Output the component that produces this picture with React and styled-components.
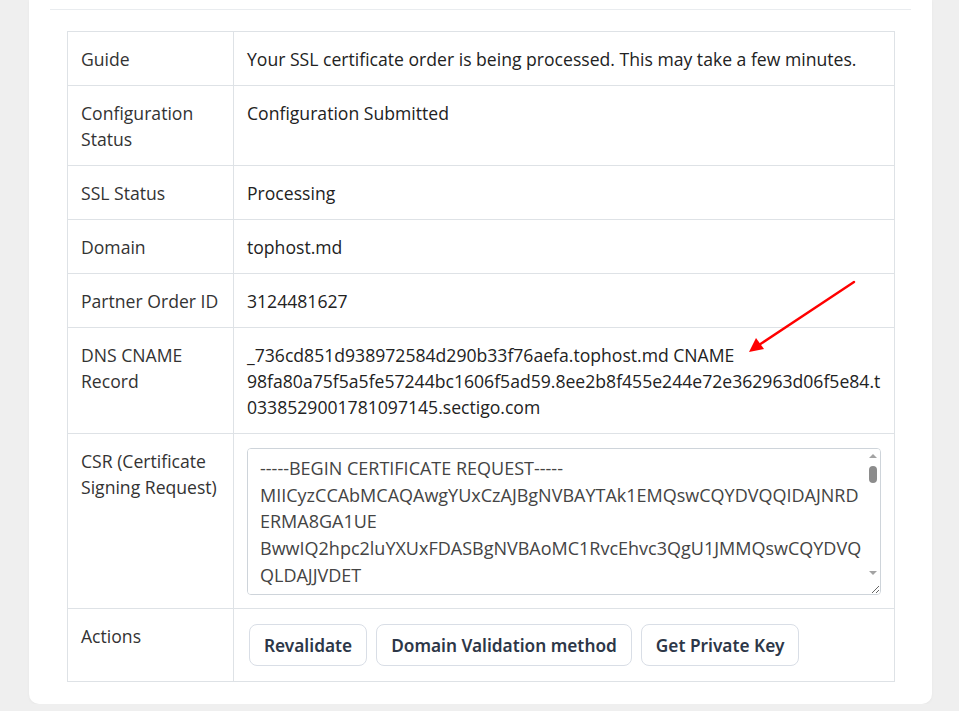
import React from "react";
import styled, { createGlobalStyle } from "styled-components";

const GlobalStyle = createGlobalStyle`
  body {
    margin: 0;
    background-color: #efefef;
    font-family: "Open Sans", "Liberation Sans", sans-serif;
    color: #212529;
  }
`;

const rows = [
  { label: "Guide", value: "Your SSL certificate order is being processed. This may take a few minutes." },
  { label: "Configuration Status", value: "Configuration Submitted" },
  { label: "SSL Status", value: "Processing" },
  { label: "Domain", value: "tophost.md" },
  { label: "Partner Order ID", value: "3124481627" },
  {
    label: "DNS CNAME Record",
    value:
      "_736cd851d938972584d290b33f76aefa.tophost.md CNAME 98fa80a75f5a5fe57244bc1606f5ad59.8ee2b8f455e244e72e362963d06f5e84.t0338529001781097145.sectigo.com",
  },
];

const csr = `-----BEGIN CERTIFICATE REQUEST-----
MIICyzCCAbMCAQAwgYUxCzAJBgNVBAYTAk1EMQswCQYDVQQIDAJNRDERMA8GA1UE
BwwIQ2hpc2luYXUxFDASBgNVBAoMC1RvcEhvc3QgU1JMMQswCQYDVQQLDAJJVDET
MBEGA1UEAwwKdG9waG9zdC5tZDEgMB4GCSqGSIb3DQEJARYRYWRtaW5AdG9waG9z
dC5tZDCCASIwDQYJKoZIhvcNAQEBBQADggEPADCCAQoCggEBAMe7xqFz3kY2vQ1n
K8pLw0rT5uJ2hX9bN4cV7mQ1sD3fG6hJ8kL0zX2cV5bN7mQ9wE1rT3yU5iO7pA9s
-----END CERTIFICATE REQUEST-----`;

const App = () => {
  return (
    <>
      <GlobalStyle />
      <Card>
        <Divider />
        <TableWrap>
          <Table>
            <tbody>
              {rows.map((r) => (
                <tr key={r.label}>
                  <Label>{r.label}</Label>
                  <Value>{r.value}</Value>
                </tr>
              ))}
              <tr>
                <Label>CSR (Certificate Signing Request)</Label>
                <Value>
                  <CsrField>
                    <CsrBox readOnly value={csr} />
                    <ScrollTrack>
                      <ScrollArrow />
                      <ScrollThumb />
                      <ScrollArrow down />
                    </ScrollTrack>
                  </CsrField>
                </Value>
              </tr>
              <tr>
                <Label>Actions</Label>
                <Value>
                  <Buttons>
                    <button>Revalidate</button>
                    <button>Domain Validation method</button>
                    <button>Get Private Key</button>
                  </Buttons>
                </Value>
              </tr>
            </tbody>
          </Table>
          <Arrow width="113" height="76" viewBox="0 0 113 76">
            <line x1="109" y1="3" x2="14" y2="66" stroke="#ff0000" strokeWidth="2.4" strokeLinecap="round" />
            <polygon points="4,73 11,59 19,70" fill="#ff0000" />
          </Arrow>
        </TableWrap>
      </Card>
    </>
  );
};

const Card = styled.div`
  width: 903px;
  margin-left: 29px;
  padding: 0 21px 22px 21px;
  box-sizing: border-box;
  background-color: #fff;
  border-radius: 0 0 10px 10px;
  box-shadow: 0 1px 3px rgba(0, 0, 0, 0.04);
`;

const Divider = styled.div`
  height: 9px;
  border-bottom: 1px solid #e9ecef;
`;

const TableWrap = styled.div`
  position: relative;
  margin: 21px 16px 0 17px;
`;

const Table = styled.table`
  width: 100%;
  border-collapse: collapse;
  font-size: 17.6px;
  line-height: 26px;
  td {
    border: 1px solid #dee2e6;
    padding: 14px 13px 13px 13px;
    vertical-align: top;
    text-align: left;
  }
`;

const Label = styled.td`
  width: 139px;
  color: #333;
`;

const Value = styled.td`
  overflow-wrap: anywhere;
  color: #222;
`;

const CsrField = styled.div`
  position: relative;
`;

const CsrBox = styled.textarea`
  display: block;
  width: 100%;
  height: 147px;
  box-sizing: border-box;
  padding: 6px 16px 6px 12px;
  border: 1px solid #ced4da;
  border-radius: 4px;
  font-family: "Open Sans", "Liberation Sans", sans-serif;
  font-size: 18px;
  line-height: 26.7px;
  color: #444;
  background: #fff;
  resize: vertical;
`;

const ScrollTrack = styled.div`
  position: absolute;
  top: 1px;
  right: 1px;
  bottom: 16px;
  width: 15px;
  display: flex;
  flex-direction: column;
  align-items: center;
  pointer-events: none;
`;

const ScrollArrow = styled.div`
  width: 0;
  height: 0;
  margin: ${(p) => (p.down ? "auto 0 4px" : "5px 0 0")};
  border-left: 4px solid transparent;
  border-right: 4px solid transparent;
  border-bottom: ${(p) => (p.down ? "none" : "4px solid #a3a3a3")};
  border-top: ${(p) => (p.down ? "4px solid #a3a3a3" : "none")};
`;

const ScrollThumb = styled.div`
  width: 8px;
  height: 17px;
  margin-top: 8px;
  border-radius: 4px;
  background: #8c8c8c;
`;

const Buttons = styled.div`
  display: flex;
  gap: 9px;
  padding: 1px 0 2px 2px;
  button {
    height: 42px;
    padding: 0 14px;
    background-color: #fff;
    border: 1px solid #d9dee6;
    border-radius: 8px;
    font-family: "Noto Sans", "Open Sans", sans-serif;
    font-size: 17.25px;
    font-weight: 600;
    color: #2d3748;
    cursor: pointer;
    &:hover {
      background-color: #f7f9fb;
    }
  }
`;

const Arrow = styled.svg`
  position: absolute;
  left: 678px;
  top: 248px;
  pointer-events: none;
`;

export default App;
